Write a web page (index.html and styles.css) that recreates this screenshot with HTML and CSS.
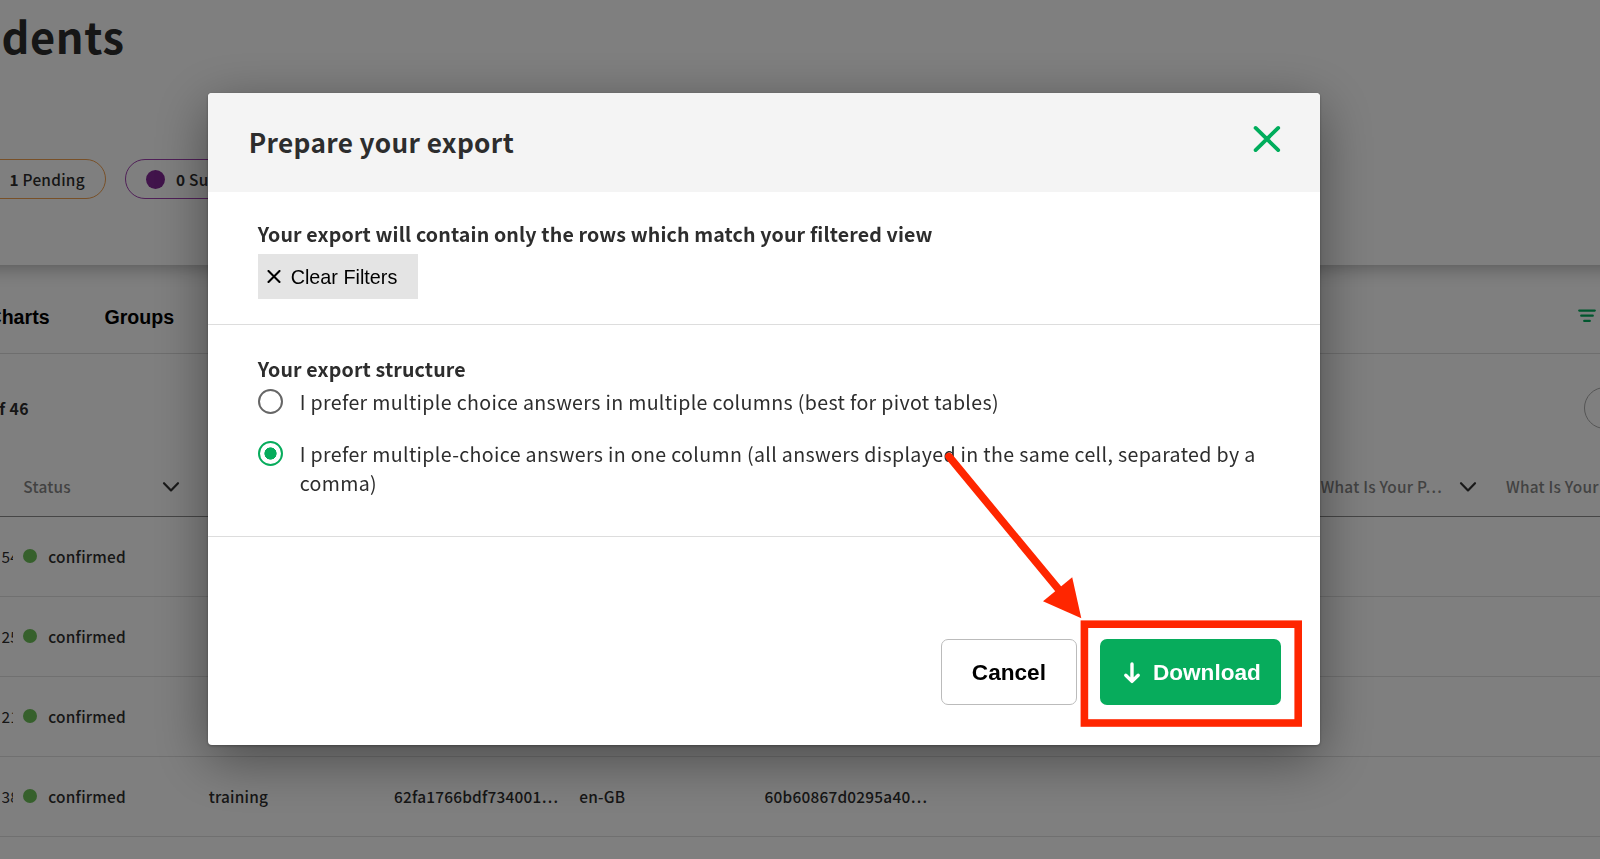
FILE: index.html
```html
<!DOCTYPE html>
<html lang="en">
<head>
<meta charset="utf-8">
<title>Prepare your export</title>
<link rel="stylesheet" href="styles.css">
</head>
<body>
<div class="page">
  <header class="hero">
    <h1 class="hero-title">dents</h1>
    <div class="pills">
      <div class="pill pill-pending"><span><b>1</b> Pending</span></div>
      <div class="pill pill-susp"><i class="pill-dot"></i><span><b>0</b> Su</span></div>
    </div>
  </header>
  <nav class="tabs">
    <span class="tab tab-charts">Charts</span>
    <span class="tab tab-groups">Groups</span>
    <svg class="filter" width="18" height="14" viewBox="0 0 18 14"><path d="M1.2 1.6H16.8M3.2 6.7H14.8M6.2 11.9H11.8" stroke="#00ad5c" stroke-width="2.2" stroke-linecap="round"/></svg>
  </nav>
  <div class="toolbar">
    <span class="count">of 46</span>
    <span class="round-btn"></span>
  </div>
  <div class="grid">
    <div class="row head">
      <span></span>
      <span class="cell"><span class="label">Status</span><svg class="chev" width="18" height="12" viewBox="0 0 18 12"><path d="M2 2.2L9 9.4L16 2.2" fill="none" stroke="#333" stroke-width="2.2" stroke-linecap="round" stroke-linejoin="round"/></svg></span>
      <span></span><span></span><span></span><span></span><span></span><span></span>
      <span class="cell"><span class="label">What Is Your P…</span><svg class="chev" width="18" height="12" viewBox="0 0 18 12"><path d="M2 2.2L9 9.4L16 2.2" fill="none" stroke="#333" stroke-width="2.2" stroke-linecap="round" stroke-linejoin="round"/></svg></span>
      <span class="cell"><span class="label">What Is Your</span></span>
    </div>
    <div class="row"><span class="id">54</span><span class="cell"><i class="dot"></i>confirmed</span></div>
    <div class="row"><span class="id">25</span><span class="cell"><i class="dot"></i>confirmed</span></div>
    <div class="row"><span class="id">21</span><span class="cell"><i class="dot"></i>confirmed</span></div>
    <div class="row"><span class="id">38</span><span class="cell"><i class="dot"></i>confirmed</span><span class="cell">training</span><span class="cell">62fa1766bdf734001…</span><span class="cell">en-GB</span><span class="cell">60b60867d0295a40…</span></div>
  </div>
</div>

<div class="overlay">
  <section class="modal">
    <header class="modal-head">
      <h2 class="modal-title">Prepare your export</h2>
      <svg class="close" width="28" height="28" viewBox="0 0 28 28"><path d="M2.6 2.9L25.2 25.1M25.2 2.9L2.6 25.1" stroke="#00ad5c" stroke-width="3.8" stroke-linecap="round"/></svg>
    </header>
    <div class="section filters">
      <p class="strong">Your export will contain only the rows which match your filtered view</p>
      <button class="clear"><svg width="14" height="14" viewBox="0 0 14 14"><path d="M1.5 1L12.5 12M12.5 1L1.5 12" stroke="#000" stroke-width="2.1" stroke-linecap="round"/></svg><span>Clear Filters</span></button>
    </div>
    <div class="section structure">
      <p class="strong">Your export structure</p>
      <label class="option o1"><i class="radio"></i><span>I prefer multiple choice answers in multiple columns (best for pivot tables)</span></label>
      <label class="option o2"><i class="radio on"></i><span>I prefer multiple-choice answers in one column (all answers displayed in the same cell, separated by a<br>comma)</span></label>
    </div>
    <footer class="actions">
      <button class="btn cancel">Cancel</button>
      <button class="btn download"><svg width="18" height="24" viewBox="0 0 18 24"><path d="M9 3V20M2.8 14.2L9 20.4L15.2 14.2" fill="none" stroke="#fff" stroke-width="3.4" stroke-linecap="round" stroke-linejoin="round"/></svg><span>Download</span></button>
    </footer>
  </section>
</div>

<svg class="annotation" width="1600" height="859" viewBox="0 0 1600 859">
  <path d="M949 456.5L1060 591" stroke="#ff2600" stroke-width="7.6" stroke-linecap="round"/>
  <path d="M1081.3 618.3L1072.2 577.2L1043 601.3Z" fill="#ff2600"/>
  <rect x="1084.4" y="624.2" width="213.8" height="98.8" fill="none" stroke="#ff2600" stroke-width="7.6"/>
</svg>
</body>
</html>
```
FILE: styles.css
```css
* { box-sizing: border-box; }
body {
  margin: 0;
  width: 1600px;
  height: 859px;
  overflow: hidden;
  background: #fff;
  color: #2d2d2d;
  font-family: "Noto Sans CJK JP", "Noto Sans", sans-serif;
}
h1, h2, p { margin: 0; }
button { font-family: "Liberation Sans", Arial, sans-serif; }

.page { width: 1600px; height: 859px; overflow: hidden; }
.hero {
  height: 265px;
  margin: 0 -40px;
  padding: 2px 40px 0;
  background: #fff;
  box-shadow: 0 1px 20px rgba(0, 0, 0, .36);
}
.hero-title { font-size: 43.4px; line-height: 66px; height: 66px; padding-left: 1.5px; font-weight: 700; letter-spacing: .6px; }
.pills { display: flex; gap: 19px; margin-top: 91px; margin-left: -60px; }
.pill {
  display: flex;
  align-items: center;
  height: 40px;
  border: 1px solid;
  border-radius: 20px;
  font-size: 15.4px;
  line-height: 38px;
  font-weight: 500;
  letter-spacing: .25px;
  white-space: nowrap;
}
.pill-pending { width: 166px; padding-left: 68.5px; border-color: #f0a050; }
.pill-susp { width: 160px; padding-left: 20px; border-color: #a040b0; }
.pill-dot { width: 19px; height: 19px; border-radius: 50%; background: #822896; margin-right: 11px; }

.tabs {
  display: flex;
  align-items: center;
  height: 89px;
  border-bottom: 1px solid #dcdcdc;
  font: 700 19.6px "Liberation Sans", Arial, sans-serif;
  color: #000;
}
.tab { padding-top: 16px; }
.tab-charts { margin-left: -12.5px; width: 117px; }
.tab-groups { flex: 1; }
.filter { margin: 14px 4.5px 0 0; }

.toolbar { display: flex; align-items: center; justify-content: space-between; height: 109px; padding-bottom: 1px; }
.count { margin-left: -11px; font-size: 15.8px; font-weight: 700; letter-spacing: .4px; white-space: nowrap; }
.round-btn { width: 80px; height: 42px; margin-right: -64px; border: 1px solid #aaa; border-radius: 21px; }

.grid { display: grid; grid-template-rows: 54px 80px 80px 80px 80px; }
.row {
  display: grid;
  grid-template-columns: 23.3px repeat(9, 185.33px);
  align-items: center;
  padding-bottom: 2px;
  border-bottom: 1px solid #e0e0e0;
  font-size: 15.4px;
  line-height: 24px;
  font-weight: 500;
  letter-spacing: .22px;
  white-space: nowrap;
}
.head { border-bottom: 1px solid #8c8c8c; color: #858585; padding-bottom: 8px; }
.cell { display: flex; align-items: center; }
.label { width: 138.5px; }
.chev { margin-top: 2px; }
.id { width: 11.5px; margin-left: 1.5px; overflow: hidden; font-weight: 400; }
.dot { width: 14px; height: 14px; border-radius: 50%; background: #6cc058; margin-right: 11px; }

.overlay {
  position: fixed;
  inset: 0;
  background: rgba(0, 0, 0, .5);
  padding: 93px 0 0 208.4px;
}
.modal {
  width: 1112px;
  height: 652px;
  border-radius: 4px;
  background: #fff;
  overflow: hidden;
  box-shadow: 0 14px 54px rgba(0, 0, 0, .42), 0 1px 3px rgba(0, 0, 0, .3);
}
.modal-head {
  display: flex;
  justify-content: space-between;
  height: 98.5px;
  padding: 32px 39px 0 40.3px;
  background: #f4f4f4;
}
.modal-title { font-size: 26.2px; line-height: 34px; font-weight: 700; letter-spacing: .36px; }
.section { border-bottom: 1.5px solid #ddd; padding-left: 49.3px; }
.filters { height: 133.5px; padding-top: 28px; }
.strong { font-size: 19.6px; line-height: 28px; font-weight: 700; letter-spacing: .14px; white-space: nowrap; }
.clear {
  display: flex;
  align-items: center;
  gap: 10px;
  width: 160.5px;
  height: 45px;
  margin-top: 6.5px;
  padding: 1px 0 0 9px;
  border: 0;
  background: #e4e4e4;
  color: #000;
  font-size: 19.8px;
}
.structure { height: 212px; padding-top: 29.5px; }
.option { display: flex; font-size: 19.6px; line-height: 28.6px; letter-spacing: .34px; white-space: nowrap; }
.option span { margin-top: -.5px; }
.o1 { margin-top: 6px; height: 52px; }
.radio { width: 25.5px; height: 25.5px; flex: none; margin-right: 16.5px; border: 2px solid #666; border-radius: 50%; }
.on { border-color: #07ac5c; background: radial-gradient(circle, #07ac5c 5.8px, #fff 6.4px); }
.actions { display: flex; gap: 23px; padding: 102px 0 0 732.5px; }
.btn { height: 66px; border-radius: 7px; font-size: 22.6px; font-weight: 700; padding: 1px 0 0; }
.cancel { width: 136px; border: 1px solid #bbb; background: #fff; color: #000; }
.download { display: flex; align-items: center; gap: 12px; width: 181px; padding-left: 23px; border: 0; background: #07ac5c; color: #fff; }

.annotation { position: absolute; left: 0; top: 0; }
```
